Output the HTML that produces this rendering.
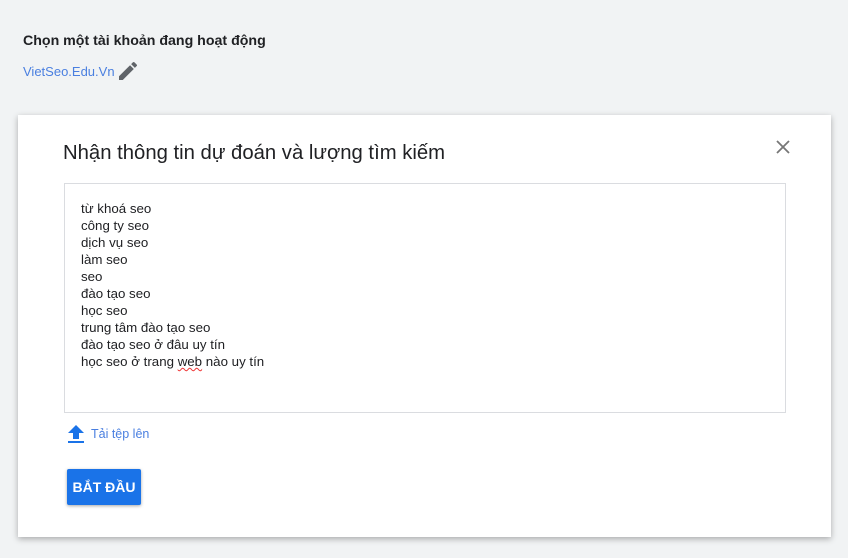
<!DOCTYPE html>
<html><head><meta charset="utf-8"><style>
*{margin:0;padding:0;box-sizing:border-box}
body{width:848px;height:558px;background:#f1f3f4;font-family:"Liberation Sans",Arial,sans-serif;position:relative;overflow:hidden}
.h{position:absolute;left:23px;top:33px;font-size:14.2px;font-weight:bold;color:#202124}
.acc{position:absolute;left:23px;top:64px;font-size:13px;color:#4a7fe0}
.pen{position:absolute;left:116px;top:59px}
.card{position:absolute;left:18px;top:115px;width:813px;height:422px;background:#fff;box-shadow:0 2px 6px rgba(0,0,0,.3)}
.t{position:absolute;left:45px;top:27px;font-size:20.3px;color:#202124}
.x{position:absolute;left:757px;top:24px}
.ta{position:absolute;left:46px;top:68px;width:722px;height:230px;border:1px solid #dadce0;padding:16px 16px;font-size:13.3px;line-height:17px;color:#202124}
.sq{text-decoration:underline wavy #e33;text-decoration-thickness:1px}
.up{position:absolute;left:49px;top:309px}
.ul{position:absolute;left:73px;top:312px;font-size:12.5px;color:#4a7fe0}
.btn{position:absolute;left:49px;top:354px;width:74px;height:36px;background:#1a73e8;color:#fff;font-weight:bold;font-size:14px;text-align:center;line-height:36px;border-radius:2px;box-shadow:0 1px 3px rgba(0,0,0,.35)}
</style></head><body>
<div class="h">Chọn một tài khoản đang hoạt động</div>
<div class="acc">VietSeo.Edu.Vn</div>
<svg class="pen" width="24" height="24" viewBox="0 0 24 24"><path fill="#5f6368" d="M3 17.25V21h3.75L17.81 9.94l-3.75-3.75L3 17.25zM20.71 7.04a1 1 0 0 0 0-1.41l-2.34-2.34a1 1 0 0 0-1.41 0l-1.83 1.83 3.75 3.75 1.83-1.83z"/></svg>
<div class="card">
<div class="t">Nhận thông tin dự đoán và lượng tìm kiếm</div>
<svg class="x" width="16" height="16" viewBox="0 0 16 16"><path d="M2 2L14 14M14 2L2 14" stroke="#777" stroke-width="1.8"/></svg>
<div class="ta">từ khoá seo<br>công ty seo<br>dịch vụ seo<br>làm seo<br>seo<br>đào tạo seo<br>học seo<br>trung tâm đào tạo seo<br>đào tạo seo ở đâu uy tín<br>học seo ở trang <span class="sq">web</span> nào uy tín</div>
<svg class="up" width="18" height="20" viewBox="0 0 18 20"><path fill="#1a73e8" d="M9 1L1 9h5v6h6V9h5z"/><rect x="1" y="17" width="16" height="2" fill="#1a73e8"/></svg>
<div class="ul">Tải tệp lên</div>
<div class="btn">BẮT ĐẦU</div>
</div>
</body></html>
